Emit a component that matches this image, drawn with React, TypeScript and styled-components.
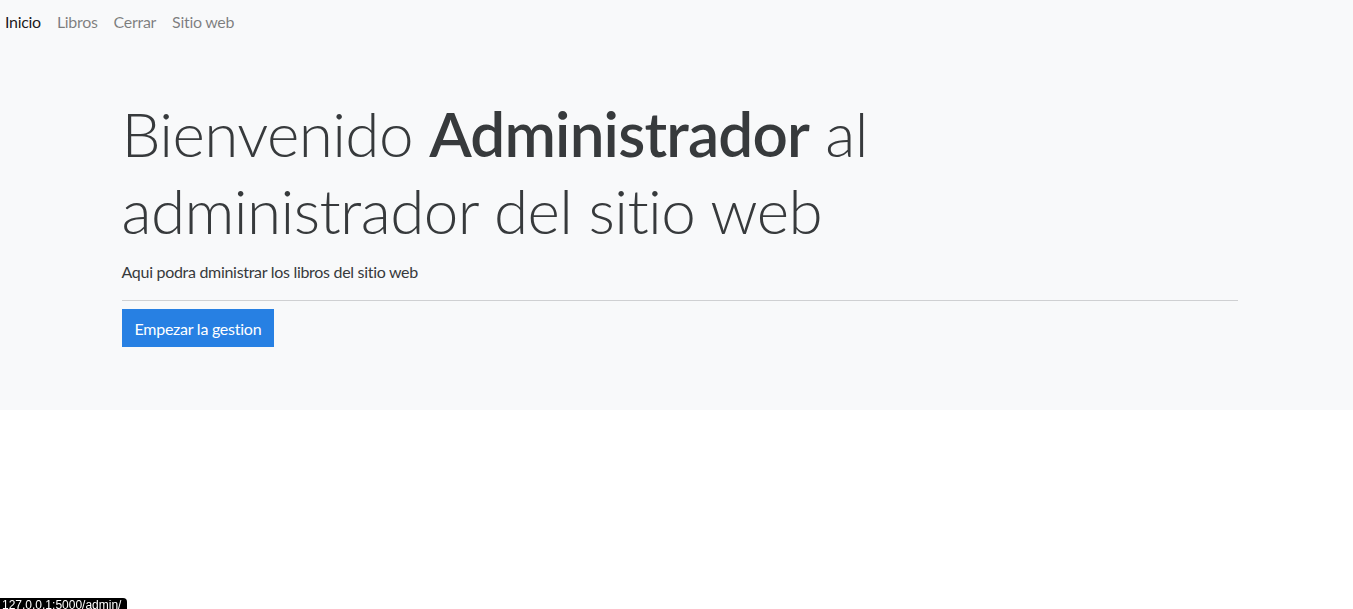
import React from "react";
import styled, { createGlobalStyle } from "styled-components";

const Global = createGlobalStyle`
  html, body { margin: 0; padding: 0; background: #ffffff; }
  body {
    font-family: "Lato", "Open Sans", "Liberation Sans", sans-serif;
    color: #373a3c;
    font-size: 16px;
  }
  * { box-sizing: border-box; }
`;

const Nav = styled.nav`
  display: flex;
  align-items: center;
  gap: 16px;
  height: 44px;
  padding: 0 0 2px 5px;
  background: #f8f9fa;
`;

const NavLink = styled.a<{ $active?: boolean }>`
  font-size: 16px;
  letter-spacing: -0.3px;
  text-decoration: none;
  color: ${(p) => (p.$active ? "rgba(0,0,0,0.9)" : "rgba(0,0,0,0.5)")};
  cursor: pointer;
`;

const Jumbotron = styled.section`
  background: #f8f9fa;
  padding: 51px 0 63px;
`;

const Container = styled.div`
  width: 1146px;
  margin: 0 auto;
  padding: 0 12px 0 18px;
  display: flex;
  flex-direction: column;
`;

const Title = styled.h1`
  margin: 0 0 11px;
  font-size: 62px;
  font-weight: 300;
  letter-spacing: -0.6px;
  line-height: 77px;
  color: #373a3c;
  strong { font-weight: 600; letter-spacing: -0.8px; }
`;

const Lead = styled.p`
  margin: 0 0 16px;
  font-size: 16px;
  letter-spacing: -0.3px;
  line-height: 24px;
`;

const Rule = styled.hr`
  width: 100%;
  margin: 0 0 8px;
  border: 0;
  border-top: 1px solid #cfd0d2;
`;

const Button = styled.a`
  align-self: flex-start;
  display: inline-flex;
  align-items: center;
  height: 38px;
  padding: 0 13px 0 13px;
  background: #2780e3;
  color: #ffffff;
  font-size: 16px;
  letter-spacing: -0.25px;
  text-decoration: none;
  cursor: pointer;
`;

const Status = styled.div`
  position: fixed;
  left: 0;
  bottom: 0;
  height: 11px;
  overflow: hidden;
  background: #000;
  color: #fff;
  font-family: "Liberation Sans", sans-serif;
  font-size: 12px;
  line-height: 14px;
  padding: 0 6px 0 2px;
  border-top-right-radius: 4px;
`;

export default function App() {
  return (
    <>
      <Global />
      <Nav>
        <NavLink $active>Inicio</NavLink>
        <NavLink>Libros</NavLink>
        <NavLink>Cerrar</NavLink>
        <NavLink>Sitio web</NavLink>
      </Nav>
      <Jumbotron>
        <Container>
          <Title>
            Bienvenido <strong>Administrador</strong> al
            <br />
            administrador del sitio web
          </Title>
          <Lead>Aqui podra dministrar los libros del sitio web</Lead>
          <Rule />
          <Button>Empezar la gestion</Button>
        </Container>
      </Jumbotron>
      <Status>127.0.0.1:5000/admin/</Status>
    </>
  );
}
